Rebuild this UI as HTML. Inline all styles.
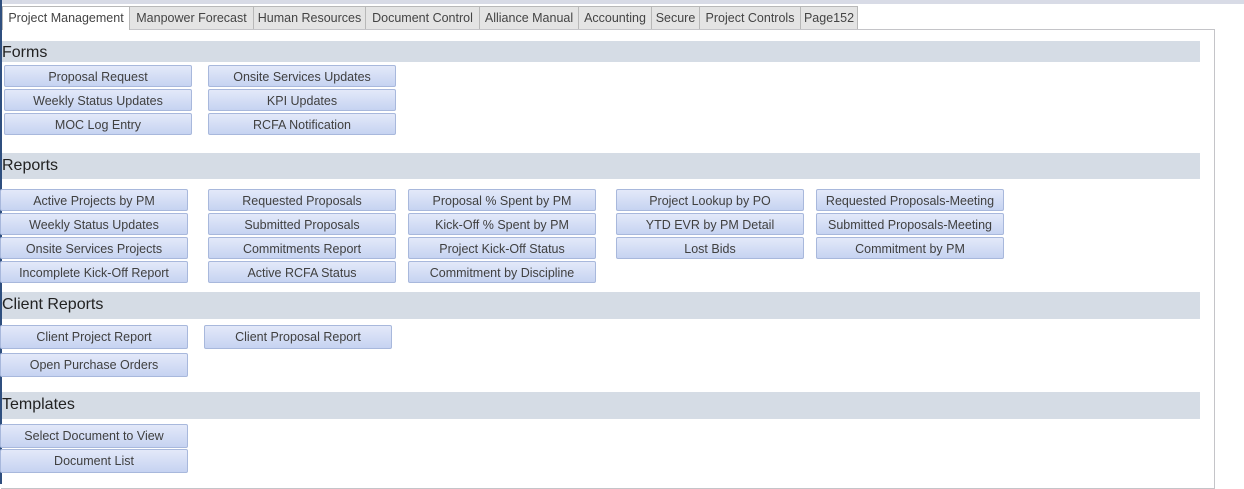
<!DOCTYPE html><html><head><style>
body{margin:0;width:1244px;height:484px;background:#fff;position:relative;overflow:hidden;font-family:"Liberation Sans",sans-serif}
.top{position:absolute;left:0;top:0;width:1244px;height:4px;background:#d8dbe6}
.lb{position:absolute;left:0;top:0;width:2px;height:484px;background:#2f4f7f}
.tab{position:absolute;top:6px;height:23px;box-sizing:border-box;border:1px solid #b8b8b8;border-bottom:none;background:#e4e4e4;font-size:12.5px;color:#444;line-height:23px;text-align:center;white-space:nowrap}
.tab.a{background:#fff;height:24px}
.panel{position:absolute;left:1px;top:29px;width:1214px;height:460px;border:1px solid #c4c4c8;border-left:none;box-sizing:border-box}
.bar{position:absolute;left:2px;width:1198px;background:#d5dce5;font-size:16px;color:#222;line-height:23px}
.b{position:absolute;height:22px;box-sizing:border-box;border:1px solid #a8b8dc;border-radius:2px;background:linear-gradient(#e3e9f9,#c6d3f1);font-size:12.5px;color:#404040;text-align:center;line-height:22px;white-space:nowrap}
</style></head><body>
<div class="top"></div>
<div class="panel"></div>
<div class="tab a" style="left:2px;width:128px">Project Management</div>
<div class="tab" style="left:129px;width:125px">Manpower Forecast</div>
<div class="tab" style="left:253px;width:113px">Human Resources</div>
<div class="tab" style="left:365px;width:115px">Document Control</div>
<div class="tab" style="left:479px;width:100px">Alliance Manual</div>
<div class="tab" style="left:578px;width:74px">Accounting</div>
<div class="tab" style="left:651px;width:49px">Secure</div>
<div class="tab" style="left:699px;width:102px">Project Controls</div>
<div class="tab" style="left:800px;width:58px">Page152</div>
<div class="lb"></div>

<div class="bar" style="top:41px;height:21px">Forms</div>
<div class="b" style="left:4px;top:65px;width:188px">Proposal Request</div>
<div class="b" style="left:4px;top:89px;width:188px">Weekly Status Updates</div>
<div class="b" style="left:4px;top:113px;width:188px">MOC Log Entry</div>
<div class="b" style="left:208px;top:65px;width:188px">Onsite Services Updates</div>
<div class="b" style="left:208px;top:89px;width:188px">KPI Updates</div>
<div class="b" style="left:208px;top:113px;width:188px">RCFA Notification</div>

<div class="bar" style="top:153px;height:26px;line-height:25px">Reports</div>
<div class="b" style="left:0;top:189px;width:188px">Active Projects by PM</div>
<div class="b" style="left:0;top:213px;width:188px">Weekly Status Updates</div>
<div class="b" style="left:0;top:237px;width:188px">Onsite Services Projects</div>
<div class="b" style="left:0;top:261px;width:188px">Incomplete Kick-Off Report</div>
<div class="b" style="left:208px;top:189px;width:188px">Requested Proposals</div>
<div class="b" style="left:208px;top:213px;width:188px">Submitted Proposals</div>
<div class="b" style="left:208px;top:237px;width:188px">Commitments Report</div>
<div class="b" style="left:208px;top:261px;width:188px">Active RCFA Status</div>
<div class="b" style="left:408px;top:189px;width:188px">Proposal % Spent by PM</div>
<div class="b" style="left:408px;top:213px;width:188px">Kick-Off % Spent by PM</div>
<div class="b" style="left:408px;top:237px;width:188px">Project Kick-Off Status</div>
<div class="b" style="left:408px;top:261px;width:188px">Commitment by Discipline</div>
<div class="b" style="left:616px;top:189px;width:188px">Project Lookup by PO</div>
<div class="b" style="left:616px;top:213px;width:188px">YTD EVR by PM Detail</div>
<div class="b" style="left:616px;top:237px;width:188px">Lost Bids</div>
<div class="b" style="left:816px;top:189px;width:188px">Requested Proposals-Meeting</div>
<div class="b" style="left:816px;top:213px;width:188px">Submitted Proposals-Meeting</div>
<div class="b" style="left:816px;top:237px;width:188px">Commitment by PM</div>

<div class="bar" style="top:292px;height:27px;line-height:25px">Client Reports</div>
<div class="b" style="left:0;top:325px;width:188px;height:24px;line-height:23px">Client Project Report</div>
<div class="b" style="left:204px;top:325px;width:188px;height:24px;line-height:23px">Client Proposal Report</div>
<div class="b" style="left:0;top:353px;width:188px;height:24px;line-height:23px">Open Purchase Orders</div>

<div class="bar" style="top:392px;height:27px;line-height:26px">Templates</div>
<div class="b" style="left:0;top:424px;width:188px;height:24px;line-height:23px">Select Document to View</div>
<div class="b" style="left:0;top:449px;width:188px;height:24px;line-height:23px">Document List</div>
</body></html>
